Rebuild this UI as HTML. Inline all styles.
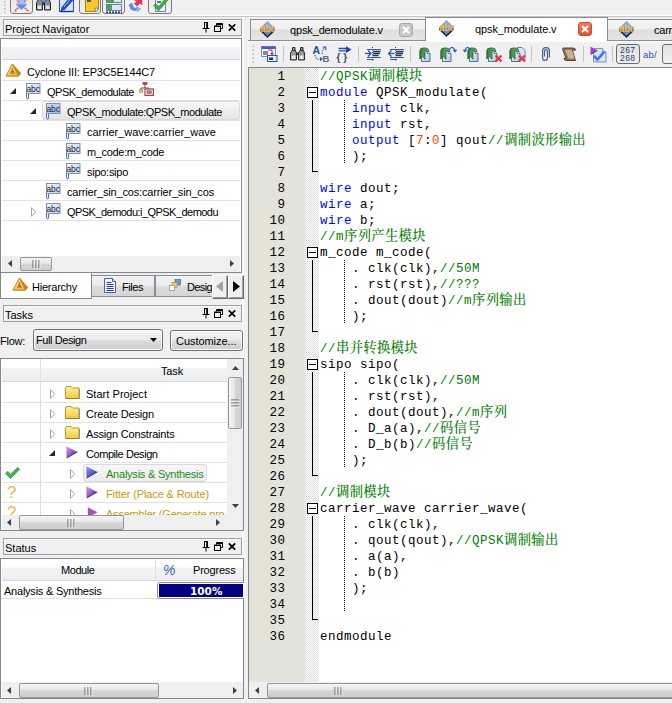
<!DOCTYPE html>
<html><head><meta charset="utf-8"><title>QPSK_demodulate</title>
<style>
*{box-sizing:border-box;margin:0;padding:0}
html,body{width:672px;height:703px;overflow:hidden;background:#f0f0f0}
body{position:relative;font-family:"Liberation Sans","Noto Sans CJK SC",sans-serif;font-size:11px;color:#000}
.abs{position:absolute}
svg{position:absolute;overflow:visible}
.t{position:absolute;white-space:pre;line-height:14px;height:14px}
.dock{position:absolute;left:3px;width:239px;height:17px;border:1px solid #a0a0a0;background:#f0f0f0;box-shadow:inset 1px 1px 0 #fafafa}
.hdr{position:absolute;background:linear-gradient(#fff 0,#fff 40%,#f2f3f5 41%,#eceef1 100%);border-bottom:1px solid #d5d5d5}
.rl{position:absolute;height:1px;background:#e2e2e2}
.sb{position:absolute;background:#efefef}
.thumb{position:absolute;border:1px solid #979797;border-radius:2px;background:linear-gradient(#f4f4f4 0,#e8e8e8 45%,#d6d6d6 50%,#cfcfcf 100%)}
.thumbv{position:absolute;border:1px solid #979797;border-radius:2px;background:linear-gradient(90deg,#f4f4f4 0,#e8e8e8 45%,#d6d6d6 50%,#cfcfcf 100%)}
.ln{position:absolute;left:249px;width:36.5px;text-align:right;font-family:"Liberation Mono",monospace;font-size:12.5px;letter-spacing:0.5px;line-height:16px;height:16px;color:#000}
.cl{position:absolute;left:320px;font-family:"Liberation Mono","Noto Serif CJK SC",monospace;font-size:12.5px;letter-spacing:0.5px;line-height:16px;height:16px;white-space:pre;color:#000}
.k{color:#00f}.c{color:#008000}.n{color:#ff4500}
.z{font-family:"Liberation Mono","Noto Serif CJK SC",monospace;font-size:13.33px;line-height:0;font-weight:500;letter-spacing:0.3px}
</style></head><body>
<div class="abs" style="left:0px;top:0px;width:672px;height:15px;background:#f0f0f0"></div>
<div class="abs" style="left:0px;top:15px;width:672px;height:1px;background:#fdfdfd"></div>
<div class="abs" style="left:0px;top:16px;width:672px;height:1px;background:#c6c6c6"></div>
<svg style="left:3px;top:0px" width="3" height="13" viewBox="0 0 3 13"><path d="M1 1h1.5v1.5H1zM1 4.5h1.5V6H1zM1 8h1.5v1.5H1zM1 11.5h1.5V13H1z" fill="#b8b8b8"/></svg>
<div class="abs" style="left:10px;top:-6px;width:23px;height:20px;border:1px solid #7a7a7a;border-radius:3px;background:linear-gradient(#e6e6e6,#f2f2f2)"></div>
<div class="abs" style="left:79px;top:-6px;width:22px;height:20px;border:1px solid #7a7a7a;border-radius:3px;background:linear-gradient(#e6e6e6,#f2f2f2)"></div>
<div class="abs" style="left:102px;top:-6px;width:23px;height:20px;border:1px solid #7a7a7a;border-radius:3px;background:linear-gradient(#e6e6e6,#f2f2f2)"></div>
<div class="abs" style="left:148px;top:-6px;width:24px;height:20px;border:1px solid #7a7a7a;border-radius:3px;background:linear-gradient(#e6e6e6,#f2f2f2)"></div>
<svg style="left:13px;top:-3px" width="17" height="16" viewBox="0 0 17 16"><path d="M1 0L16 15M16 0L1 15" stroke="#f0507c" stroke-width="2.2" stroke-dasharray="1.6 1"/><path d="M8.5 2L14 7.5 8.5 13 3 7.5Z" fill="#5f8fe0"/><path d="M8.5 2L14 7.5H3Z" fill="#9fc0f4"/></svg>
<svg style="left:36px;top:-4px" width="16" height="15" viewBox="0 0 16 15"><path d="M2.500 0.500h2.500v3l1.500 3v7.500h-6v-7.500l2-3Z" fill="#8c8c8c" stroke="#262626" stroke-width="1"/><rect x="1.500" y="9.500" width="4" height="3.500" fill="#e4e4e4"/><g transform="translate(8,0)"><path d="M2.500 0.500h2.500v3l1.500 3v7.500h-6v-7.500l2-3Z" fill="#8c8c8c" stroke="#262626" stroke-width="1"/><rect x="1.500" y="9.500" width="4" height="3.500" fill="#e4e4e4"/></g><rect x="6" y="6" width="3" height="3" fill="#333"/><path d="M7.500 0L11 3.500 7.500 7 4 3.500Z" fill="#5f8fe0" stroke="#3a62b8" stroke-width=".5"/></svg>
<svg style="left:59px;top:-4px" width="15" height="16" viewBox="0 0 15 16"><rect x="0.5" y="0.5" width="14" height="15" fill="#dbe6fb" stroke="#2a50c8"/><path d="M14.5 0.500L11 0.500L2.500 11.500L1.500 15.500L5.500 14L14.500 4Z" fill="#2448c8"/><path d="M12 2L5 11" stroke="#9fb8f4" stroke-width="1"/><path d="M1 15.500h13" stroke="#1c36a8" stroke-width="1.400"/></svg>
<svg style="left:85px;top:-5px" width="14" height="17" viewBox="0 0 14 17"><path d="M0.5 0.5h13v13l-3 3h-10Z" fill="#fbc828" stroke="#b07d10"/><path d="M2 6h4M2 3h3" stroke="#2a6b55" stroke-width="2"/><circle cx="11.5" cy="14.5" r="1.6" fill="#e8f0ff" stroke="#3a59b8" stroke-width=".8"/></svg>
<svg style="left:106px;top:-4px" width="16" height="17" viewBox="0 0 16 17"><rect x="0.5" y="0.5" width="15" height="6" fill="#dfe8f7" stroke="#6a7fa8"/><rect x="0.5" y="8.5" width="15" height="6" fill="#dfe8f7" stroke="#6a7fa8"/><rect x="1" y="1" width="7" height="5" fill="#4fa54a"/><rect x="1" y="9" width="5" height="5" fill="#4fa54a"/><path d="M0 16.2h16" stroke="#1c2fb0" stroke-width="1.6" stroke-dasharray="2 1"/></svg>
<svg style="left:128px;top:-4px" width="15" height="16" viewBox="0 0 15 16"><path d="M5 3.500L14 3L14.500 9.500L12 7.500L9 10.500L6 7.500L8.500 5.500Z" fill="#e8305e"/><path d="M0.500 9L4 6.500L5 9Q5.500 12.500 8.500 12L8 10.500L13 12.500L9.500 16L9 14.600Q2.500 16 1.500 10.500Z" fill="#5d8fd8"/><path d="M8 10.500L13 12.500L9.500 16Z" fill="#8fb4ea"/></svg>
<svg style="left:153px;top:-5px" width="15" height="18" viewBox="0 0 15 18"><rect x="2.5" y="0.5" width="10" height="16" fill="#eef3fc" stroke="#7486b0"/><path d="M4 4h5M4 7h4" stroke="#31427a" stroke-width="1.3"/><path d="M0.5 10.5l2-2 3 3 7.5-8.5 2 2-9.5 11Z" fill="#3fae3a" stroke="#2a8a28" stroke-width=".6"/></svg>
<div class="abs" style="left:242px;top:17px;width:2px;height:686px;background:#f9f9f9"></div>
<div class="dock" style="top:19px"></div>
<span class="t" style="left:5px;top:22px;">Project Navigator</span>
<svg style="left:202px;top:22px" width="8" height="10" viewBox="0 0 8 10"><path d="M2 0.500h4M2.500 0.500v5.500M5.500 0.500v5.500M4.700 1v5M0.500 6.500h7M4 7v3.500" stroke="#000" stroke-width="1" fill="none"/></svg>
<svg style="left:214px;top:23px" width="9" height="9" viewBox="0 0 9 9"><path d="M2.5 0.5h6v5h-2M2.5 0.5v2M2.5 1.5h6" stroke="#000" fill="none"/><rect x="0.5" y="3" width="6" height="5.5" fill="none" stroke="#000"/><path d="M0.5 3.5h6" stroke="#000"/></svg>
<svg style="left:228px;top:24px" width="8" height="7" viewBox="0 0 8 7"><path d="M0.8 0.3L7.2 6.7M7.2 0.3L0.8 6.7" stroke="#000" stroke-width="1.7" fill="none"/></svg>
<div class="abs" style="left:0px;top:38px;width:242px;height:235px;border:1px solid #828790;background:#fff"></div>
<div class="hdr" style="left:2px;top:39px;width:238px;height:21px"></div>
<div class="rl" style="left:2px;top:80px;width:238px"></div>
<div class="rl" style="left:2px;top:100px;width:238px"></div>
<div class="rl" style="left:2px;top:120px;width:238px"></div>
<div class="rl" style="left:2px;top:140px;width:238px"></div>
<div class="rl" style="left:2px;top:160px;width:238px"></div>
<div class="rl" style="left:2px;top:180px;width:238px"></div>
<div class="rl" style="left:2px;top:200px;width:238px"></div>
<div class="rl" style="left:2px;top:220px;width:238px"></div>
<div class="abs" style="left:42px;top:101px;width:198px;height:19px;border:1px solid #d9d9d9;border-radius:2px;background:linear-gradient(#f8f8f8,#e5e5e5)"></div>
<svg style="left:5px;top:63px" width="17" height="14" viewBox="0 0 17 14"><defs><linearGradient id="cy" x1="0" y1="0" x2="1" y2="1"><stop offset="0" stop-color="#ffe680"/><stop offset="1" stop-color="#f2a81d"/></linearGradient></defs><path d="M7.5 0.6L16.3 10.5L13.5 13.4H0.8Z" fill="#c9851a"/><path d="M7.3 1L13.6 13H0.9Z" fill="url(#cy)" stroke="#b8821e" stroke-width=".8"/><path d="M7.3 5v6M5.3 11l2-3 2 3M6 8.5h2.6" stroke="#a0522d" stroke-width=".8" fill="none"/></svg>
<span class="t" style="left:27px;top:65px;letter-spacing:-0.195px;">Cyclone III: EP3C5E144C7</span>
<svg style="left:10px;top:88px" width="6" height="6" viewBox="0 0 6 6"><path d="M6 0V6H0Z" fill="#262626"/></svg>
<svg style="left:26px;top:83px" width="15" height="17" viewBox="0 0 15 17"><defs><linearGradient id="ab" x1="0" y1="0" x2="1" y2="1"><stop offset="0" stop-color="#f2f7fe"/><stop offset="1" stop-color="#bcd2f2"/></linearGradient></defs><rect x="0.5" y="0.5" width="13.5" height="10" fill="url(#ab)" stroke="#8391ab"/><text x="0.4" y="8.700" font-family="Liberation Sans,sans-serif" font-size="8.800" fill="#1a1a1a" textLength="13.600" lengthAdjust="spacingAndGlyphs">abc</text><path d="M0.600 10.500v4.300q0 1 1 1t1-1v-4" fill="#fff" stroke="#2a4fc0" stroke-width=".9"/></svg>
<span class="t" style="left:47px;top:85px;letter-spacing:-0.478px;">QPSK_demodulate</span>
<svg style="left:139px;top:82px" width="15" height="14" viewBox="0 0 15 14"><rect x="4" y="0.5" width="4" height="2" fill="#e0284a" stroke="#902038" stroke-width=".6"/><path d="M6 3v3M2 9V6h8v3" stroke="#555" fill="none"/><rect x="0.3" y="7.8" width="3.4" height="2.4" fill="#f4d24a" stroke="#9a8420" stroke-width=".6"/><rect x="6" y="7" width="8.4" height="6.4" fill="#fff" stroke="#e8204c" stroke-width="1.2"/><rect x="8" y="8.8" width="4.4" height="2.8" fill="#5fae7a" stroke="#3b7a55" stroke-width=".6"/></svg>
<svg style="left:30px;top:108px" width="6" height="6" viewBox="0 0 6 6"><path d="M6 0V6H0Z" fill="#262626"/></svg>
<svg style="left:46px;top:103px" width="15" height="17" viewBox="0 0 15 17"><defs><linearGradient id="abs" x1="0" y1="0" x2="1" y2="1"><stop offset="0" stop-color="#cfe2fb"/><stop offset="1" stop-color="#8fbaf4"/></linearGradient></defs><rect x="0.5" y="0.5" width="13.5" height="10" fill="url(#abs)" stroke="#8391ab"/><text x="0.4" y="8.700" font-family="Liberation Sans,sans-serif" font-size="8.800" fill="#1a1a1a" textLength="13.600" lengthAdjust="spacingAndGlyphs">abc</text><path d="M0.600 10.500v4.300q0 1 1 1t1-1v-4" fill="#fff" stroke="#2a4fc0" stroke-width=".9"/></svg>
<span class="t" style="left:67px;top:105px;letter-spacing:-0.442px;">QPSK_modulate:QPSK_modulate</span>
<svg style="left:66px;top:123px" width="15" height="17" viewBox="0 0 15 17"><defs><linearGradient id="ab" x1="0" y1="0" x2="1" y2="1"><stop offset="0" stop-color="#f2f7fe"/><stop offset="1" stop-color="#bcd2f2"/></linearGradient></defs><rect x="0.5" y="0.5" width="13.5" height="10" fill="url(#ab)" stroke="#8391ab"/><text x="0.4" y="8.700" font-family="Liberation Sans,sans-serif" font-size="8.800" fill="#1a1a1a" textLength="13.600" lengthAdjust="spacingAndGlyphs">abc</text><path d="M0.600 10.500v4.300q0 1 1 1t1-1v-4" fill="#fff" stroke="#2a4fc0" stroke-width=".9"/></svg>
<span class="t" style="left:87px;top:125px;letter-spacing:0.000px;">carrier_wave:carrier_wave</span>
<svg style="left:66px;top:143px" width="15" height="17" viewBox="0 0 15 17"><defs><linearGradient id="ab" x1="0" y1="0" x2="1" y2="1"><stop offset="0" stop-color="#f2f7fe"/><stop offset="1" stop-color="#bcd2f2"/></linearGradient></defs><rect x="0.5" y="0.5" width="13.5" height="10" fill="url(#ab)" stroke="#8391ab"/><text x="0.4" y="8.700" font-family="Liberation Sans,sans-serif" font-size="8.800" fill="#1a1a1a" textLength="13.600" lengthAdjust="spacingAndGlyphs">abc</text><path d="M0.600 10.500v4.300q0 1 1 1t1-1v-4" fill="#fff" stroke="#2a4fc0" stroke-width=".9"/></svg>
<span class="t" style="left:87px;top:145px;letter-spacing:-0.333px;">m_code:m_code</span>
<svg style="left:66px;top:163px" width="15" height="17" viewBox="0 0 15 17"><defs><linearGradient id="ab" x1="0" y1="0" x2="1" y2="1"><stop offset="0" stop-color="#f2f7fe"/><stop offset="1" stop-color="#bcd2f2"/></linearGradient></defs><rect x="0.5" y="0.5" width="13.5" height="10" fill="url(#ab)" stroke="#8391ab"/><text x="0.4" y="8.700" font-family="Liberation Sans,sans-serif" font-size="8.800" fill="#1a1a1a" textLength="13.600" lengthAdjust="spacingAndGlyphs">abc</text><path d="M0.600 10.500v4.300q0 1 1 1t1-1v-4" fill="#fff" stroke="#2a4fc0" stroke-width=".9"/></svg>
<span class="t" style="left:87px;top:165px;letter-spacing:-0.269px;">sipo:sipo</span>
<svg style="left:46px;top:183px" width="15" height="17" viewBox="0 0 15 17"><defs><linearGradient id="ab" x1="0" y1="0" x2="1" y2="1"><stop offset="0" stop-color="#f2f7fe"/><stop offset="1" stop-color="#bcd2f2"/></linearGradient></defs><rect x="0.5" y="0.5" width="13.5" height="10" fill="url(#ab)" stroke="#8391ab"/><text x="0.4" y="8.700" font-family="Liberation Sans,sans-serif" font-size="8.800" fill="#1a1a1a" textLength="13.600" lengthAdjust="spacingAndGlyphs">abc</text><path d="M0.600 10.500v4.300q0 1 1 1t1-1v-4" fill="#fff" stroke="#2a4fc0" stroke-width=".9"/></svg>
<span class="t" style="left:67px;top:185px;letter-spacing:-0.169px;">carrier_sin_cos:carrier_sin_cos</span>
<svg style="left:31px;top:207px" width="6" height="10" viewBox="0 0 6 10"><path d="M0.5 0.8L4.8 5L0.5 9.2Z" fill="#fff" stroke="#a5a5a5" stroke-width="1"/></svg>
<svg style="left:46px;top:203px" width="15" height="17" viewBox="0 0 15 17"><defs><linearGradient id="ab" x1="0" y1="0" x2="1" y2="1"><stop offset="0" stop-color="#f2f7fe"/><stop offset="1" stop-color="#bcd2f2"/></linearGradient></defs><rect x="0.5" y="0.5" width="13.5" height="10" fill="url(#ab)" stroke="#8391ab"/><text x="0.4" y="8.700" font-family="Liberation Sans,sans-serif" font-size="8.800" fill="#1a1a1a" textLength="13.600" lengthAdjust="spacingAndGlyphs">abc</text><path d="M0.600 10.500v4.300q0 1 1 1t1-1v-4" fill="#fff" stroke="#2a4fc0" stroke-width=".9"/></svg>
<span class="t" style="left:67px;top:205px;letter-spacing:-0.540px;">QPSK_demodu:i_QPSK_demodu</span>
<div class="sb" style="left:2px;top:256px;width:238px;height:16px"></div>
<svg style="left:8px;top:260px" width="4" height="7" viewBox="0 0 4 7"><path d="M4 0V7L0 3.5Z" fill="#404040"/></svg>
<svg style="left:230px;top:260px" width="4" height="7" viewBox="0 0 4 7"><path d="M0 0V7L4 3.5Z" fill="#404040"/></svg>
<div class="thumb" style="left:20px;top:257px;width:32px;height:14px"></div>
<svg style="left:32px;top:260px" width="8" height="8" viewBox="0 0 8 8"><path d="M1 0v8M4 0v8M7 0v8" stroke="#5a5a5a" stroke-width="1"/><path d="M2 0v8M5 0v8M8 0v8" stroke="#fff" stroke-width="1" opacity=".7"/></svg>
<div class="abs" style="left:0px;top:272px;width:92px;height:27px;background:#fff;border:1px solid #828790;border-top:none"></div>
<div class="abs" style="left:1px;top:272px;width:239px;height:1px;background:#828790"></div>
<svg style="left:12px;top:277px" width="17" height="14" viewBox="0 0 17 14"><defs><linearGradient id="cy2" x1="0" y1="0" x2="1" y2="1"><stop offset="0" stop-color="#ffe680"/><stop offset="1" stop-color="#f2a81d"/></linearGradient></defs><path d="M7.5 0.6L16.3 10.5L13.5 13.4H0.8Z" fill="#c9851a"/><path d="M7.3 1L13.6 13H0.9Z" fill="url(#cy2)" stroke="#b8821e" stroke-width=".8"/><path d="M7.3 5v6M5.3 11l2-3 2 3M6 8.5h2.6" stroke="#a0522d" stroke-width=".8" fill="none"/></svg>
<span class="t" style="left:32px;top:280px;letter-spacing:-0.231px;">Hierarchy</span>
<div class="abs" style="left:92px;top:275px;width:63px;height:22px;border:1px solid #898c95;border-left:none;background:linear-gradient(#f2f2f2 0,#ebebeb 50%,#dddddd 51%,#d4d4d4 100%)"></div>
<svg style="left:104px;top:278px" width="12" height="15" viewBox="0 0 12 15"><path d="M0.5 0.5h8l3 3v11h-11Z" fill="#f4f7ff" stroke="#4a5fb0"/><path d="M8.5 0.5v3h3" fill="#cfd9f5" stroke="#4a5fb0"/><path d="M2.5 4.5h5M2.5 6.5h7M2.5 8.5h7M2.5 10.5h7M2.5 12.5h7" stroke="#2334b4" stroke-width="1"/></svg>
<span class="t" style="left:122px;top:280px;letter-spacing:-0.447px;">Files</span>
<div class="abs" style="left:155px;top:275px;width:58px;height:22px;border:1px solid #898c95;background:linear-gradient(#f2f2f2 0,#ebebeb 50%,#dddddd 51%,#d4d4d4 100%)"></div>
<svg style="left:169px;top:279px" width="12" height="12" viewBox="0 0 12 12"><rect x="6" y="0.5" width="5.5" height="5.5" fill="#6f95e0" stroke="#3b5fb8" stroke-width=".7"/><rect x="3" y="3.5" width="5" height="5" fill="#f6d24a" stroke="#b39320" stroke-width=".7"/><rect x="0.5" y="6.5" width="5" height="5" fill="#fff" stroke="#8a95b5" stroke-width=".8"/></svg>
<span class="t" style="left:187px;top:280px;letter-spacing:-0.625px;">Desig</span>
<div class="abs" style="left:212px;top:275px;width:16px;height:24px;background:#f0f0f0;border-top:1px solid #fff;border-left:1px solid #fff;border-right:1px solid #696969;border-bottom:1px solid #696969;box-shadow:inset -1px -1px 0 #a0a0a0"></div>
<div class="abs" style="left:228px;top:275px;width:16px;height:24px;background:#f0f0f0;border-top:1px solid #fff;border-left:1px solid #fff;border-right:1px solid #696969;border-bottom:1px solid #696969;box-shadow:inset -1px -1px 0 #a0a0a0"></div>
<svg style="left:216px;top:281px" width="7" height="11" viewBox="0 0 7 11"><path d="M7 0V11L0 5.5Z" fill="#a0a0a0"/></svg>
<svg style="left:233px;top:281px" width="7" height="11" viewBox="0 0 7 11"><path d="M0 0V11L7 5.5Z" fill="#000"/></svg>
<div class="dock" style="top:305px"></div>
<span class="t" style="left:5px;top:308px;">Tasks</span>
<svg style="left:202px;top:308px" width="8" height="10" viewBox="0 0 8 10"><path d="M2 0.500h4M2.500 0.500v5.500M5.500 0.500v5.500M4.700 1v5M0.500 6.500h7M4 7v3.500" stroke="#000" stroke-width="1" fill="none"/></svg>
<svg style="left:214px;top:309px" width="9" height="9" viewBox="0 0 9 9"><path d="M2.5 0.5h6v5h-2M2.5 0.5v2M2.5 1.5h6" stroke="#000" fill="none"/><rect x="0.5" y="3" width="6" height="5.5" fill="none" stroke="#000"/><path d="M0.5 3.5h6" stroke="#000"/></svg>
<svg style="left:228px;top:310px" width="8" height="7" viewBox="0 0 8 7"><path d="M0.8 0.3L7.2 6.7M7.2 0.3L0.8 6.7" stroke="#000" stroke-width="1.7" fill="none"/></svg>
<span class="t" style="left:0px;top:334px;letter-spacing:-0.256px;">Flow:</span>
<div class="abs" style="left:33px;top:329px;width:130px;height:22px;border:1px solid #707070;border-radius:3px;background:linear-gradient(#f2f2f2 0,#ebebeb 48%,#dddddd 52%,#cfcfcf 100%);box-shadow:inset 0 0 0 1px #fcfcfc"></div>
<span class="t" style="left:36px;top:333px;letter-spacing:-0.412px;">Full Design</span>
<svg style="left:150px;top:338px" width="7" height="4" viewBox="0 0 7 4"><path d="M0 0H7L3.5 4Z" fill="#000"/></svg>
<div class="abs" style="left:170px;top:330px;width:73px;height:21px;border:1px solid #707070;border-radius:3px;background:linear-gradient(#f2f2f2 0,#ebebeb 48%,#dddddd 52%,#cfcfcf 100%);box-shadow:inset 0 0 0 1px #fcfcfc"></div>
<span class="t" style="left:176px;top:334px;letter-spacing:-0.053px;">Customize...</span>
<div class="abs" style="left:0px;top:358px;width:244px;height:173px;border:1px solid #828790;background:#fff"></div>
<div class="hdr" style="left:2px;top:359px;width:225px;height:23px"></div>
<div class="abs" style="left:40px;top:359px;width:1px;height:22px;background:#e0e0e0"></div>
<div class="abs" style="left:40px;top:382px;width:1px;height:133px;background:#dcdcdc"></div>
<span class="t" style="left:161px;top:364px;letter-spacing:-0.156px;">Task</span>
<div class="rl" style="left:2px;top:402px;width:225px"></div>
<div class="rl" style="left:2px;top:422px;width:225px"></div>
<div class="rl" style="left:2px;top:442px;width:225px"></div>
<div class="rl" style="left:2px;top:462px;width:225px"></div>
<div class="rl" style="left:2px;top:482px;width:225px"></div>
<div class="rl" style="left:2px;top:502px;width:225px"></div>
<svg style="left:50px;top:389px" width="6" height="10" viewBox="0 0 6 10"><path d="M0.5 0.8L4.8 5L0.5 9.2Z" fill="#fff" stroke="#a5a5a5" stroke-width="1"/></svg>
<svg style="left:65px;top:386px" width="15" height="13" viewBox="0 0 15 13"><defs><linearGradient id="fo" x1="0" y1="0" x2="0" y2="1"><stop offset="0" stop-color="#fff2a8"/><stop offset="1" stop-color="#f5c931"/></linearGradient></defs><path d="M0.5 2.5q0-2 2-2h3.5l1.5 1.5h6.5v10.5h-13.5Z" fill="url(#fo)" stroke="#b5962a" stroke-width="1"/><path d="M1 12.5h13.5V3" stroke="#6f6a5a" stroke-width="1" fill="none" opacity=".55"/></svg>
<span class="t" style="left:86px;top:387px;letter-spacing:0.036px;">Start Project</span>
<svg style="left:50px;top:409px" width="6" height="10" viewBox="0 0 6 10"><path d="M0.5 0.8L4.8 5L0.5 9.2Z" fill="#fff" stroke="#a5a5a5" stroke-width="1"/></svg>
<svg style="left:65px;top:406px" width="15" height="13" viewBox="0 0 15 13"><defs><linearGradient id="fo" x1="0" y1="0" x2="0" y2="1"><stop offset="0" stop-color="#fff2a8"/><stop offset="1" stop-color="#f5c931"/></linearGradient></defs><path d="M0.5 2.5q0-2 2-2h3.5l1.5 1.5h6.5v10.5h-13.5Z" fill="url(#fo)" stroke="#b5962a" stroke-width="1"/><path d="M1 12.5h13.5V3" stroke="#6f6a5a" stroke-width="1" fill="none" opacity=".55"/></svg>
<span class="t" style="left:86px;top:407px;letter-spacing:-0.179px;">Create Design</span>
<svg style="left:50px;top:429px" width="6" height="10" viewBox="0 0 6 10"><path d="M0.5 0.8L4.8 5L0.5 9.2Z" fill="#fff" stroke="#a5a5a5" stroke-width="1"/></svg>
<svg style="left:65px;top:426px" width="15" height="13" viewBox="0 0 15 13"><defs><linearGradient id="fo" x1="0" y1="0" x2="0" y2="1"><stop offset="0" stop-color="#fff2a8"/><stop offset="1" stop-color="#f5c931"/></linearGradient></defs><path d="M0.5 2.5q0-2 2-2h3.5l1.5 1.5h6.5v10.5h-13.5Z" fill="url(#fo)" stroke="#b5962a" stroke-width="1"/><path d="M1 12.5h13.5V3" stroke="#6f6a5a" stroke-width="1" fill="none" opacity=".55"/></svg>
<span class="t" style="left:86px;top:427px;letter-spacing:-0.179px;">Assign Constraints</span>
<svg style="left:49px;top:450px" width="6" height="6" viewBox="0 0 6 6"><path d="M6 0V6H0Z" fill="#262626"/></svg>
<svg style="left:66px;top:446px" width="12" height="13" viewBox="0 0 12 13"><defs><linearGradient id="pl66446" x1="0" y1="0" x2="1" y2="1"><stop offset="0" stop-color="#d9a8ee"/><stop offset=".75" stop-color="#7a2aa8"/></linearGradient></defs><path d="M0.8 0.4L11.3 6L0.8 12Z" fill="url(#pl66446)"/><path d="M0.8 12L11.3 6" stroke="#2a2338" stroke-width="1" opacity=".75"/><path d="M0.8 0.400V12" stroke="#4a3a8a" stroke-width=".6" opacity=".6"/></svg>
<span class="t" style="left:86px;top:447px;letter-spacing:-0.440px;">Compile Design</span>
<svg style="left:5px;top:467px" width="15" height="12" viewBox="0 0 15 12"><path d="M0.5 6.5L2.8 4.2L5.6 7.2L12.8 0.4L14.6 2.2L5.6 11.6Z" fill="#4caf50" stroke="#2e8b32" stroke-width=".7"/></svg>
<svg style="left:70px;top:469px" width="6" height="10" viewBox="0 0 6 10"><path d="M0.5 0.8L4.8 5L0.5 9.2Z" fill="#fff" stroke="#a5a5a5" stroke-width="1"/></svg>
<div class="abs" style="left:83px;top:464px;width:124px;height:18px;border:1px solid #d9d9d9;border-radius:3px;background:linear-gradient(#f8f8f8,#ebebeb)"></div>
<svg style="left:86px;top:466px" width="12" height="13" viewBox="0 0 12 13"><defs><linearGradient id="pl86466" x1="0" y1="0" x2="1" y2="1"><stop offset="0" stop-color="#9aa0f0"/><stop offset=".75" stop-color="#3b3fc8"/></linearGradient></defs><path d="M0.8 0.4L11.3 6L0.8 12Z" fill="url(#pl86466)"/><path d="M0.8 12L11.3 6" stroke="#2a2338" stroke-width="1" opacity=".75"/><path d="M0.8 0.400V12" stroke="#4a3a8a" stroke-width=".6" opacity=".6"/></svg>
<span class="t" style="left:106px;top:467px;letter-spacing:-0.230px;color:#1e8c1e;">Analysis &amp; Synthesis</span>
<span class="t" style="left:7px;top:486px;letter-spacing:-0.969px;color:#efb73e;font-size:17px;">?</span>
<svg style="left:70px;top:489px" width="6" height="10" viewBox="0 0 6 10"><path d="M0.5 0.8L4.8 5L0.5 9.2Z" fill="#fff" stroke="#a5a5a5" stroke-width="1"/></svg>
<svg style="left:86px;top:486px" width="12" height="13" viewBox="0 0 12 13"><defs><linearGradient id="pl86486" x1="0" y1="0" x2="1" y2="1"><stop offset="0" stop-color="#d9a8ee"/><stop offset=".75" stop-color="#7a2aa8"/></linearGradient></defs><path d="M0.8 0.4L11.3 6L0.8 12Z" fill="url(#pl86486)"/><path d="M0.8 12L11.3 6" stroke="#2a2338" stroke-width="1" opacity=".75"/><path d="M0.8 0.400V12" stroke="#4a3a8a" stroke-width=".6" opacity=".6"/></svg>
<span class="t" style="left:106px;top:487px;letter-spacing:-0.126px;color:#c89a0a;">Fitter (Place &amp; Route)</span>
<div class="abs" style="left:2px;top:503px;width:225px;height:12px;overflow:hidden"><span class="t" style="left:5px;top:1px;font-size:17px;color:#efb73e;line-height:18px;height:18px">?</span><svg style="left:68px;top:6px" width="6" height="10" viewBox="0 0 6 10"><path d="M0.5 0.8L4.8 5L0.5 9.2Z" fill="#fff" stroke="#a5a5a5"/></svg><svg style="left:85px;top:4px" width="11" height="11" viewBox="0 0 11 11"><path d="M0.8 0.3L10.5 5.3L0.8 10.6Z" fill="#a050c8"/></svg><span class="t" style="left:104px;top:4px;color:#c89a0a;letter-spacing:-0.217px">Assembler (Generate pro</span></div>
<div class="sb" style="left:227px;top:359px;width:16px;height:156px"></div>
<svg style="left:232px;top:366px" width="7" height="4" viewBox="0 0 7 4"><path d="M0 4H7L3.5 0Z" fill="#404040"/></svg>
<svg style="left:232px;top:504px" width="7" height="4" viewBox="0 0 7 4"><path d="M0 0H7L3.5 4Z" fill="#404040"/></svg>
<div class="thumbv" style="left:228px;top:377px;width:14px;height:52px"></div>
<svg style="left:231px;top:399px" width="8" height="8" viewBox="0 0 8 8"><path d="M0 1h8M0 4h8M0 7h8" stroke="#5a5a5a" stroke-width="1"/><path d="M0 2h8M0 5h8M0 8h8" stroke="#fff" stroke-width="1" opacity=".7"/></svg>
<div class="sb" style="left:2px;top:515px;width:241px;height:15px"></div>
<svg style="left:7px;top:519px" width="4" height="7" viewBox="0 0 4 7"><path d="M4 0V7L0 3.5Z" fill="#404040"/></svg>
<svg style="left:216px;top:519px" width="4" height="7" viewBox="0 0 4 7"><path d="M0 0V7L4 3.5Z" fill="#404040"/></svg>
<div class="thumb" style="left:19px;top:515px;width:105px;height:15px"></div>
<svg style="left:67px;top:519px" width="8" height="8" viewBox="0 0 8 8"><path d="M1 0v8M4 0v8M7 0v8" stroke="#5a5a5a" stroke-width="1"/><path d="M2 0v8M5 0v8M8 0v8" stroke="#fff" stroke-width="1" opacity=".7"/></svg>
<div class="dock" style="top:538px"></div>
<span class="t" style="left:5px;top:541px;">Status</span>
<svg style="left:202px;top:541px" width="8" height="10" viewBox="0 0 8 10"><path d="M2 0.500h4M2.500 0.500v5.500M5.500 0.500v5.500M4.700 1v5M0.500 6.500h7M4 7v3.500" stroke="#000" stroke-width="1" fill="none"/></svg>
<svg style="left:214px;top:542px" width="9" height="9" viewBox="0 0 9 9"><path d="M2.5 0.5h6v5h-2M2.5 0.5v2M2.5 1.5h6" stroke="#000" fill="none"/><rect x="0.5" y="3" width="6" height="5.5" fill="none" stroke="#000"/><path d="M0.5 3.5h6" stroke="#000"/></svg>
<svg style="left:228px;top:543px" width="8" height="7" viewBox="0 0 8 7"><path d="M0.8 0.3L7.2 6.7M7.2 0.3L0.8 6.7" stroke="#000" stroke-width="1.7" fill="none"/></svg>
<div class="abs" style="left:0px;top:558px;width:244px;height:141px;border:1px solid #828790;background:#fff"></div>
<div class="hdr" style="left:2px;top:559px;width:241px;height:22px"></div>
<div class="abs" style="left:155px;top:559px;width:1px;height:21px;background:#e0e0e0"></div>
<span class="t" style="left:61px;top:563px;letter-spacing:-0.430px;">Module</span>
<span class="t" style="left:163px;top:563px;letter-spacing:-1.453px;color:#3a5fc0;font-size:14px;font-style:italic;">%</span>
<span class="t" style="left:193px;top:563px;letter-spacing:-0.191px;">Progress</span>
<span class="t" style="left:4px;top:584px;letter-spacing:-0.230px;">Analysis &amp; Synthesis</span>
<div class="abs" style="left:2px;top:598px;width:241px;height:1px;background:#e2e2e2"></div>
<div class="abs" style="left:157px;top:582px;width:90px;height:17px;border:1px solid #8a8a8a;border-radius:3px;background:#fff"></div>
<div class="abs" style="left:159px;top:584px;width:84px;height:13px;background:#000080"></div>
<span class="t" style="left:190px;top:584px;color:#fff;font-size:10.5px;font-weight:bold;font-family:'DejaVu Sans','Liberation Sans',sans-serif;">100%</span>
<div class="sb" style="left:2px;top:682px;width:241px;height:16px"></div>
<svg style="left:7px;top:687px" width="4" height="7" viewBox="0 0 4 7"><path d="M4 0V7L0 3.5Z" fill="#404040"/></svg>
<svg style="left:233px;top:687px" width="4" height="7" viewBox="0 0 4 7"><path d="M0 0V7L4 3.5Z" fill="#404040"/></svg>
<div class="thumb" style="left:19px;top:683px;width:140px;height:15px"></div>
<svg style="left:84px;top:687px" width="8" height="8" viewBox="0 0 8 8"><path d="M1 0v8M4 0v8M7 0v8" stroke="#5a5a5a" stroke-width="1"/><path d="M2 0v8M5 0v8M8 0v8" stroke="#fff" stroke-width="1" opacity=".7"/></svg>
<div class="abs" style="left:244px;top:17px;width:4px;height:686px;background:#f0f0f0"></div>
<div class="abs" style="left:248px;top:41px;width:424px;height:26px;background:#f0f0f0;border-top:1px solid #fbfbfb;border-left:1px solid #fbfbfb"></div>
<div class="abs" style="left:248px;top:40px;width:424px;height:1px;background:#8c8c8c"></div>
<div class="abs" style="left:250px;top:19px;width:176px;height:21px;border:1px solid #898c95;border-bottom:none;background:linear-gradient(#f4f4f4 0,#efefef 45%,#dedede 50%,#e6e6e6 100%)"></div>
<svg style="left:259px;top:21px" width="17" height="17" viewBox="0 0 17 17"><path d="M8.5 3L16 9.5L8.5 16.6L1 9.5Z" fill="#111" stroke="#111" stroke-width="1" stroke-dasharray="1.2 1.2"/><path d="M8.5 0.2L16.2 7.8L8.5 15L0.8 7.8Z" fill="#5f8ad8"/><path d="M8.5 0.2L16.2 7.8H0.8Z" fill="#86a9ea"/><text x="1.3" y="10.6" font-family="Liberation Sans,sans-serif" font-weight="bold" font-size="10" fill="#ffb61a" textLength="15.2" lengthAdjust="spacingAndGlyphs">abc</text></svg>
<span class="t" style="left:290px;top:23px;letter-spacing:-0.142px;">qpsk_demodulate.v</span>
<div class="abs" style="left:399px;top:23px;width:14px;height:14px;border:1px solid #a8a8a8;border-radius:3px;background:#c9c9c9"></div>
<svg style="left:402px;top:26px" width="8" height="8" viewBox="0 0 8 8"><path d="M1 1L7 7M7 1L1 7" stroke="#fff" stroke-width="2"/></svg>
<div class="abs" style="left:607px;top:19px;width:70px;height:21px;border:1px solid #898c95;border-bottom:none;background:linear-gradient(#f4f4f4 0,#efefef 45%,#dedede 50%,#e6e6e6 100%)"></div>
<svg style="left:618px;top:21px" width="17" height="17" viewBox="0 0 17 17"><path d="M8.5 3L16 9.5L8.5 16.6L1 9.5Z" fill="#111" stroke="#111" stroke-width="1" stroke-dasharray="1.2 1.2"/><path d="M8.5 0.2L16.2 7.8L8.5 15L0.8 7.8Z" fill="#5f8ad8"/><path d="M8.5 0.2L16.2 7.8H0.8Z" fill="#86a9ea"/><text x="1.3" y="10.6" font-family="Liberation Sans,sans-serif" font-weight="bold" font-size="10" fill="#ffb61a" textLength="15.2" lengthAdjust="spacingAndGlyphs">abc</text></svg>
<span class="t" style="left:654px;top:23px;letter-spacing:-0.238px;">carr</span>
<div class="abs" style="left:425px;top:17px;width:183px;height:24px;border:1px solid #898c95;border-bottom:none;background:#fff"></div>
<svg style="left:438px;top:20px" width="17" height="17" viewBox="0 0 17 17"><path d="M8.5 3L16 9.5L8.5 16.6L1 9.5Z" fill="#111" stroke="#111" stroke-width="1" stroke-dasharray="1.2 1.2"/><path d="M8.5 0.2L16.2 7.8L8.5 15L0.8 7.8Z" fill="#5f8ad8"/><path d="M8.5 0.2L16.2 7.8H0.8Z" fill="#86a9ea"/><text x="1.3" y="10.6" font-family="Liberation Sans,sans-serif" font-weight="bold" font-size="10" fill="#ffb61a" textLength="15.2" lengthAdjust="spacingAndGlyphs">abc</text></svg>
<span class="t" style="left:475px;top:22px;letter-spacing:-0.111px;">qpsk_modulate.v</span>
<div class="abs" style="left:578px;top:22px;width:14px;height:14px;border:1px solid #d8452a;border-radius:3px;background:linear-gradient(#f08060,#e2522e)"></div>
<svg style="left:581px;top:25px" width="8" height="8" viewBox="0 0 8 8"><path d="M1 1L7 7M7 1L1 7" stroke="#fff" stroke-width="2"/></svg>
<svg style="left:252px;top:45px" width="3" height="18" viewBox="0 0 3 18"><path d="M0.5 0.5h1.5v1.5H.5zM0.5 4.5h1.5V6H.5zM0.5 8.5h1.5V10H.5zM0.5 12.5h1.5V14H.5zM0.5 16.5h1.5V18H.5z" fill="#b4b4b4"/></svg>
<div class="abs" style="left:283px;top:46px;width:1px;height:16px;background:#c4c4c4"></div>
<div class="abs" style="left:358px;top:46px;width:1px;height:16px;background:#c4c4c4"></div>
<div class="abs" style="left:410px;top:46px;width:1px;height:16px;background:#c4c4c4"></div>
<div class="abs" style="left:531px;top:46px;width:1px;height:16px;background:#c4c4c4"></div>
<div class="abs" style="left:583px;top:46px;width:1px;height:16px;background:#c4c4c4"></div>
<div class="abs" style="left:612px;top:46px;width:1px;height:16px;background:#c4c4c4"></div>
<svg style="left:261px;top:46px" width="17" height="16" viewBox="0 0 17 16"><rect x="0.5" y="0.5" width="14" height="10" fill="#f4f6fb" stroke="#7a8cb8"/><rect x="0.5" y="0.5" width="14" height="2.5" fill="#3b5fc8"/><rect x="2" y="5" width="5" height="4" fill="#8a8a8a"/><path d="M7 4h4v3" stroke="#d02050" fill="none"/><path d="M9 7h4l-2 2.5Z" fill="#d02050"/><rect x="6.5" y="9.500" width="9.5" height="6" fill="#e8eefc" stroke="#2a4fb8"/><rect x="8" y="11.500" width="4" height="2.500" fill="#1c2f8a"/></svg>
<svg style="left:290px;top:47px" width="16" height="13" viewBox="0 0 16 13"><path d="M2.500 0.500h2.500v2.500l1.500 3v7h-6v-7l2-3Z" fill="#9a9a9a" stroke="#2a2a2a" stroke-width="1"/><rect x="1.500" y="8.500" width="4" height="3.500" fill="#e8e8e8"/><path d="M2.500 3.500h2.500" stroke="#2a2a2a"/><g transform="translate(8,0)"><path d="M2.500 0.500h2.500v2.500l1.500 3v7h-6v-7l2-3Z" fill="#9a9a9a" stroke="#2a2a2a" stroke-width="1"/><rect x="1.500" y="8.500" width="4" height="3.500" fill="#e8e8e8"/><path d="M2.500 3.500h2.500" stroke="#2a2a2a"/></g><rect x="6" y="5.500" width="3" height="2.500" fill="#333"/></svg>
<svg style="left:313px;top:46px" width="17" height="16" viewBox="0 0 17 16"><text x="-0.500" y="7.600" font-family="Liberation Sans,sans-serif" font-weight="bold" font-size="10.500" fill="#1a4fa8">A</text><text x="9.600" y="15.800" font-family="Liberation Sans,sans-serif" font-weight="bold" font-size="9.500" fill="#5a6868">B</text><path d="M2 9q1 5.500 6 4" stroke="#2a5fd0" stroke-width="1.300" fill="none" stroke-dasharray="1.200 1.200"/><path d="M7 10.800l3 2.200-3 2.200Z" fill="#2a5fd0"/><path d="M9.500 8q-1-4 2.500-6.500" stroke="#2a5fd0" stroke-width="1.200" fill="none" stroke-dasharray="1.200 1.200"/><path d="M9.800 1.200h3v3" stroke="#2a5fd0" stroke-width="1.200" fill="none"/></svg>
<svg style="left:337px;top:46px" width="15" height="16" viewBox="0 0 15 16"><path d="M1.500 2.500h8M1.500 4.800h8" stroke="#2a4fc0" stroke-width="1.300"/><path d="M9 0.300l5.500 3.300-5.500 3.400Z" fill="#1c3fb8"/><text x="-0.500" y="14.500" font-family="Liberation Sans,sans-serif" font-size="10.500" fill="#3a4a6a" font-weight="bold" textLength="10.500" lengthAdjust="spacingAndGlyphs">{ }</text></svg>
<svg style="left:365px;top:47px" width="17" height="15" viewBox="0 0 17 15"><path d="M0 6.500h5" stroke="#2a4fd0" stroke-width="1.300"/><path d="M3 3.500l3 3-3 3" fill="none" stroke="#2a4fd0" stroke-width="1.300"/><path d="M2 2.500h14M2 10.500h14M2 12.500h7" stroke="#3f5f8f" stroke-width="1"/><path d="M8 4.500h7.500M8 6.500h7M8 8.500h5.500" stroke="#1f3a5f" stroke-width="1.700"/><path d="M7.500 0v15" stroke="#1f3a7f" stroke-width="1" stroke-dasharray="1 1.500"/></svg>
<svg style="left:388px;top:47px" width="17" height="15" viewBox="0 0 17 15"><path d="M1 6.500h5.500" stroke="#2a4fd0" stroke-width="1.300"/><path d="M3.500 3.500l-3 3 3 3" fill="none" stroke="#2a4fd0" stroke-width="1.300"/><path d="M2 2.500h14M2 10.500h14M2 12.500h7" stroke="#3f5f8f" stroke-width="1"/><path d="M8 4.500h7.500M8 6.500h7M8 8.500h5.500" stroke="#1f3a5f" stroke-width="1.700"/><path d="M7.500 0v15" stroke="#1f3a7f" stroke-width="1" stroke-dasharray="1 1.500"/></svg>
<svg style="left:419px;top:47px" width="14" height="16" viewBox="0 0 14 16"><defs><linearGradient id="bmd" x1="0" y1="0" x2="1" y2="1"><stop offset="0" stop-color="#ffffff"/><stop offset="1" stop-color="#a9c0ea"/></linearGradient><linearGradient id="bmg" x1="0" y1="0" x2="1" y2="0"><stop offset="0" stop-color="#2c7a33"/><stop offset="1" stop-color="#86cf8c"/></linearGradient></defs><path d="M2.5 3.5h5.5l3 3v8h-8.5Z" fill="url(#bmd)" stroke="#5b6f92"/><path d="M8 3.5v3h3" fill="#dfe8fa" stroke="#5b6f92" stroke-width=".8"/><path d="M0.8 12V4.2Q0.800 1 4 1H6.500Q9.800 1 9.800 4.600L7.800 4.600Q7.800 3.200 6.600 3.200H6V12.200L3.400 9.600Z" fill="url(#bmg)" stroke="#1e5a25" stroke-width=".8"/></svg>
<svg style="left:440px;top:47px" width="17" height="16" viewBox="0 0 17 16"><defs><linearGradient id="bmd" x1="0" y1="0" x2="1" y2="1"><stop offset="0" stop-color="#ffffff"/><stop offset="1" stop-color="#a9c0ea"/></linearGradient><linearGradient id="bmg" x1="0" y1="0" x2="1" y2="0"><stop offset="0" stop-color="#2c7a33"/><stop offset="1" stop-color="#86cf8c"/></linearGradient></defs><path d="M2.5 3.5h5.5l3 3v8h-8.5Z" fill="url(#bmd)" stroke="#5b6f92"/><path d="M8 3.5v3h3" fill="#dfe8fa" stroke="#5b6f92" stroke-width=".8"/><path d="M0.8 12V4.2Q0.800 1 4 1H6.500Q9.800 1 9.800 4.600L7.800 4.600Q7.800 3.200 6.600 3.200H6V12.200L3.400 9.600Z" fill="url(#bmg)" stroke="#1e5a25" stroke-width=".8"/><path d="M9 3.500Q11.500 -2.500 15 3" fill="none" stroke="#2a5fd0" stroke-width="1.200"/><path d="M12.600 2.800h4.800l-2.400 3Z" fill="#2a5fd0"/></svg>
<svg style="left:463px;top:47px" width="17" height="16" viewBox="0 0 17 16"><g transform="translate(4,0)"><defs><linearGradient id="bmd" x1="0" y1="0" x2="1" y2="1"><stop offset="0" stop-color="#ffffff"/><stop offset="1" stop-color="#a9c0ea"/></linearGradient><linearGradient id="bmg" x1="0" y1="0" x2="1" y2="0"><stop offset="0" stop-color="#2c7a33"/><stop offset="1" stop-color="#86cf8c"/></linearGradient></defs><path d="M2.5 3.5h5.5l3 3v8h-8.5Z" fill="url(#bmd)" stroke="#5b6f92"/><path d="M8 3.5v3h3" fill="#dfe8fa" stroke="#5b6f92" stroke-width=".8"/><path d="M0.8 12V4.2Q0.800 1 4 1H6.500Q9.800 1 9.800 4.600L7.800 4.600Q7.800 3.200 6.600 3.200H6V12.200L3.400 9.600Z" fill="url(#bmg)" stroke="#1e5a25" stroke-width=".8"/></g><path d="M7.500 3.500Q5 -2.500 1.800 3" fill="none" stroke="#2a5fd0" stroke-width="1.200"/><path d="M-0.500 2.800h4.800l-2.400 3Z" fill="#2a5fd0"/></svg>
<svg style="left:486px;top:47px" width="17" height="16" viewBox="0 0 17 16"><defs><linearGradient id="bmd" x1="0" y1="0" x2="1" y2="1"><stop offset="0" stop-color="#ffffff"/><stop offset="1" stop-color="#a9c0ea"/></linearGradient><linearGradient id="bmg" x1="0" y1="0" x2="1" y2="0"><stop offset="0" stop-color="#2c7a33"/><stop offset="1" stop-color="#86cf8c"/></linearGradient></defs><path d="M2.5 3.5h5.5l3 3v8h-8.5Z" fill="url(#bmd)" stroke="#5b6f92"/><path d="M8 3.5v3h3" fill="#dfe8fa" stroke="#5b6f92" stroke-width=".8"/><path d="M0.8 12V4.2Q0.800 1 4 1H6.500Q9.800 1 9.800 4.600L7.800 4.600Q7.800 3.200 6.600 3.200H6V12.200L3.400 9.600Z" fill="url(#bmg)" stroke="#1e5a25" stroke-width=".8"/><g transform="translate(8.500,7.500)"><path d="M1 1l6 6M7 1l-6 6" stroke="#e8304a" stroke-width="2.2"/></g></svg>
<svg style="left:509px;top:47px" width="17" height="16" viewBox="0 0 17 16"><path d="M8.500 0.500h4.500l3 3v9h-7.500Z" fill="#dfe7f7" stroke="#6a7aa5"/><defs><linearGradient id="bmd" x1="0" y1="0" x2="1" y2="1"><stop offset="0" stop-color="#ffffff"/><stop offset="1" stop-color="#a9c0ea"/></linearGradient><linearGradient id="bmg" x1="0" y1="0" x2="1" y2="0"><stop offset="0" stop-color="#2c7a33"/><stop offset="1" stop-color="#86cf8c"/></linearGradient></defs><path d="M2.5 3.5h5.5l3 3v8h-8.5Z" fill="url(#bmd)" stroke="#5b6f92"/><path d="M8 3.5v3h3" fill="#dfe8fa" stroke="#5b6f92" stroke-width=".8"/><path d="M0.8 12V4.2Q0.800 1 4 1H6.500Q9.800 1 9.800 4.600L7.800 4.600Q7.800 3.200 6.600 3.200H6V12.200L3.400 9.600Z" fill="url(#bmg)" stroke="#1e5a25" stroke-width=".8"/><g transform="translate(9,7.500)"><path d="M1 1l6 6M7 1l-6 6" stroke="#e8304a" stroke-width="2.2"/></g></svg>
<svg style="left:542px;top:47px" width="8" height="14" viewBox="0 0 8 14"><path d="M2.500 9.500V4.500q0-1.800 1.500-1.800t1.500 1.800v6.500q0 2.300-2.500 2.300t-2.400-2.300V4q0-3.400 3.400-3.400t3.400 3.400v6.500" fill="none" stroke="#3f5f8a" stroke-width="1.200"/></svg>
<svg style="left:561px;top:47px" width="16" height="15" viewBox="0 0 16 15"><path d="M2.500 1h9.500q2.500 0 2.500 2.200h-3.200l3.200 10.300H5.500q-2.500 0-2.500-2.200h2L2 3.500Q1 1 2.500 1Z" fill="#8f6f55" stroke="#4a3626" stroke-width=".900"/><path d="M4 2.800h6.800l2.800 9H7.500Z" fill="#c9b091"/></svg>
<svg style="left:590px;top:46px" width="17" height="17" viewBox="0 0 17 17"><path d="M3.500 2.500h9l3.500 3.500v10h-12.500Z" fill="#d9e5fb" stroke="#7a90c8"/><path d="M12.500 2.500v3.500h3.500" fill="#f4f8ff" stroke="#7a90c8" stroke-width=".8"/><path d="M0.500 0.500l7 4-7 4Z" fill="#a040c8"/><path d="M0.500 8.500l7-4" stroke="#4a2a6a" stroke-width=".8"/><path d="M4 10l3.500 3.500 7-8" fill="none" stroke="#3f72e0" stroke-width="2.600"/></svg>
<div class="abs" style="left:616px;top:44px;width:24px;height:20px;border:1px solid #6a6a6a;border-radius:3px;background:linear-gradient(#e2e2e2,#f0f0f0)"></div>
<span class="t" style="left:620px;top:46px;letter-spacing:0.438px;color:#1f3f78;font-size:8.5px;line-height:9px;height:9px;">267</span>
<span class="t" style="left:620px;top:54px;letter-spacing:0.438px;color:#1f3f78;font-size:8.5px;line-height:9px;height:9px;">268</span>
<span class="t" style="left:643px;top:48px;letter-spacing:0.260px;color:#2a4fc0;font-size:9.5px;">ab/</span>
<div class="abs" style="left:662px;top:44px;width:24px;height:20px;border:1px solid #6a6a6a;border-radius:3px;background:linear-gradient(#e2e2e2,#f0f0f0)"></div>
<div class="abs" style="left:248px;top:67px;width:424px;height:632px;background:#fff;border-top:1px solid #828790;border-left:1px solid #828790;border-bottom:1px solid #828790"></div>
<div class="abs" style="left:249px;top:68px;width:56px;height:614px;background:#e4e3da"></div>
<div class="abs" style="left:305px;top:68px;width:14px;height:614px;background:#fff;background-image:linear-gradient(45deg,#dcdcdc 25%,transparent 25%,transparent 75%,#dcdcdc 75%),linear-gradient(45deg,#dcdcdc 25%,transparent 25%,transparent 75%,#dcdcdc 75%);background-size:2px 2px;background-position:0 0,1px 1px"></div>
<div class="abs" style="left:307px;top:87px;width:11px;height:11px;border:1px solid #000;background:#fff"></div>
<div class="abs" style="left:309px;top:92px;width:7px;height:1px;background:#000"></div>
<div class="abs" style="left:312px;top:100px;width:1px;height:72px;background:#000"></div>
<div class="abs" style="left:312px;top:171px;width:6px;height:1px;background:#000"></div>
<div class="abs" style="left:344px;top:100px;width:1px;height:64px;background-image:linear-gradient(#000 50%,transparent 50%);background-size:1px 2px"></div>
<div class="abs" style="left:307px;top:247px;width:11px;height:11px;border:1px solid #000;background:#fff"></div>
<div class="abs" style="left:309px;top:252px;width:7px;height:1px;background:#000"></div>
<div class="abs" style="left:312px;top:260px;width:1px;height:72px;background:#000"></div>
<div class="abs" style="left:312px;top:331px;width:6px;height:1px;background:#000"></div>
<div class="abs" style="left:344px;top:260px;width:1px;height:64px;background-image:linear-gradient(#000 50%,transparent 50%);background-size:1px 2px"></div>
<div class="abs" style="left:307px;top:359px;width:11px;height:11px;border:1px solid #000;background:#fff"></div>
<div class="abs" style="left:309px;top:364px;width:7px;height:1px;background:#000"></div>
<div class="abs" style="left:312px;top:372px;width:1px;height:104px;background:#000"></div>
<div class="abs" style="left:312px;top:475px;width:6px;height:1px;background:#000"></div>
<div class="abs" style="left:344px;top:372px;width:1px;height:96px;background-image:linear-gradient(#000 50%,transparent 50%);background-size:1px 2px"></div>
<div class="abs" style="left:307px;top:503px;width:11px;height:11px;border:1px solid #000;background:#fff"></div>
<div class="abs" style="left:309px;top:508px;width:7px;height:1px;background:#000"></div>
<div class="abs" style="left:312px;top:516px;width:1px;height:104px;background:#000"></div>
<div class="abs" style="left:312px;top:619px;width:6px;height:1px;background:#000"></div>
<div class="abs" style="left:344px;top:516px;width:1px;height:96px;background-image:linear-gradient(#000 50%,transparent 50%);background-size:1px 2px"></div>
<div class="ln" style="top:69px">1</div><div class="cl" style="top:69px"><span class="c">//QPSK<span class="z">调制模块</span></span></div>
<div class="ln" style="top:85px">2</div><div class="cl" style="top:85px"><span class="k">module</span> QPSK_modulate(</div>
<div class="ln" style="top:101px">3</div><div class="cl" style="top:101px">    <span class="k">input</span> clk,</div>
<div class="ln" style="top:117px">4</div><div class="cl" style="top:117px">    <span class="k">input</span> rst,</div>
<div class="ln" style="top:133px">5</div><div class="cl" style="top:133px">    <span class="k">output</span> [<span class="n">7</span>:<span class="n">0</span>] qout<span class="c">//<span class="z">调制波形输出</span></span></div>
<div class="ln" style="top:149px">6</div><div class="cl" style="top:149px">    );</div>
<div class="ln" style="top:165px">7</div><div class="cl" style="top:165px"></div>
<div class="ln" style="top:181px">8</div><div class="cl" style="top:181px"><span class="k">wire</span> dout;</div>
<div class="ln" style="top:197px">9</div><div class="cl" style="top:197px"><span class="k">wire</span> a;</div>
<div class="ln" style="top:213px">10</div><div class="cl" style="top:213px"><span class="k">wire</span> b;</div>
<div class="ln" style="top:229px">11</div><div class="cl" style="top:229px"><span class="c">//m<span class="z">序列产生模块</span></span></div>
<div class="ln" style="top:245px">12</div><div class="cl" style="top:245px">m_code m_code(</div>
<div class="ln" style="top:261px">13</div><div class="cl" style="top:261px">    . clk(clk),<span class="c">//50M</span></div>
<div class="ln" style="top:277px">14</div><div class="cl" style="top:277px">    . rst(rst),<span class="c">//???</span></div>
<div class="ln" style="top:293px">15</div><div class="cl" style="top:293px">    . dout(dout)<span class="c">//m<span class="z">序列输出</span></span></div>
<div class="ln" style="top:309px">16</div><div class="cl" style="top:309px">    );</div>
<div class="ln" style="top:325px">17</div><div class="cl" style="top:325px"></div>
<div class="ln" style="top:341px">18</div><div class="cl" style="top:341px"><span class="c">//<span class="z">串并转换模块</span></span></div>
<div class="ln" style="top:357px">19</div><div class="cl" style="top:357px">sipo sipo(</div>
<div class="ln" style="top:373px">20</div><div class="cl" style="top:373px">    . clk(clk),<span class="c">//50M</span></div>
<div class="ln" style="top:389px">21</div><div class="cl" style="top:389px">    . rst(rst),</div>
<div class="ln" style="top:405px">22</div><div class="cl" style="top:405px">    . dout(dout),<span class="c">//m<span class="z">序列</span></span></div>
<div class="ln" style="top:421px">23</div><div class="cl" style="top:421px">    . D_a(a),<span class="c">//<span class="z">码信号</span></span></div>
<div class="ln" style="top:437px">24</div><div class="cl" style="top:437px">    . D_b(b)<span class="c">//<span class="z">码信号</span></span></div>
<div class="ln" style="top:453px">25</div><div class="cl" style="top:453px">    );</div>
<div class="ln" style="top:469px">26</div><div class="cl" style="top:469px"></div>
<div class="ln" style="top:485px">27</div><div class="cl" style="top:485px"><span class="c">//<span class="z">调制模块</span></span></div>
<div class="ln" style="top:501px">28</div><div class="cl" style="top:501px">carrier_wave carrier_wave(</div>
<div class="ln" style="top:517px">29</div><div class="cl" style="top:517px">    . clk(clk),</div>
<div class="ln" style="top:533px">30</div><div class="cl" style="top:533px">    . qout(qout),<span class="c">//QPSK<span class="z">调制输出</span></span></div>
<div class="ln" style="top:549px">31</div><div class="cl" style="top:549px">    . a(a),</div>
<div class="ln" style="top:565px">32</div><div class="cl" style="top:565px">    . b(b)</div>
<div class="ln" style="top:581px">33</div><div class="cl" style="top:581px">    );</div>
<div class="ln" style="top:597px">34</div><div class="cl" style="top:597px"></div>
<div class="ln" style="top:613px">35</div><div class="cl" style="top:613px"></div>
<div class="ln" style="top:629px">36</div><div class="cl" style="top:629px">endmodule</div>
<div class="sb" style="left:249px;top:682px;width:423px;height:16px"></div>
<svg style="left:255px;top:687px" width="4" height="7" viewBox="0 0 4 7"><path d="M4 0V7L0 3.5Z" fill="#404040"/></svg>
<div class="thumb" style="left:267px;top:683px;width:420px;height:15px"></div>
<svg style="left:334px;top:687px" width="8" height="8" viewBox="0 0 8 8"><path d="M1 0v8M4 0v8M7 0v8" stroke="#5a5a5a" stroke-width="1"/><path d="M2 0v8M5 0v8M8 0v8" stroke="#fff" stroke-width="1" opacity=".7"/></svg>
</body></html>
